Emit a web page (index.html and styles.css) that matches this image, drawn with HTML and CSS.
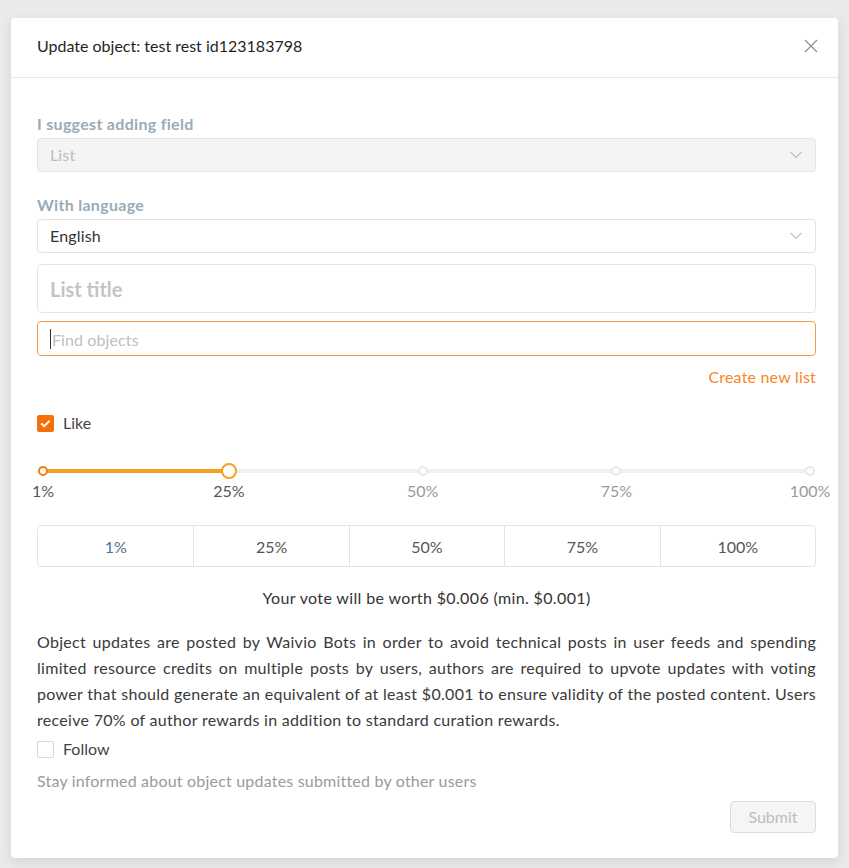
FILE: index.html
```html
<!DOCTYPE html>
<html>
<head>
<meta charset="utf-8">
<link rel="stylesheet" href="styles.css">
</head>
<body>
<div class="backdrop">
  <div class="modal">
    <div class="modal-header">
      <div class="modal-title">Update object: test rest id123183798</div>
      <svg class="close" width="14" height="14" viewBox="0 0 14 14"><path d="M1 1 L13 13 M13 1 L1 13" stroke="#8c8c8c" stroke-width="1.2" fill="none"/></svg>
    </div>
    <div class="modal-body">
      <div class="label">I suggest adding field</div>
      <div class="select disabled">
        <span class="select-value">List</span>
        <svg class="chev" width="12" height="8" viewBox="0 0 12 8"><path d="M0.5 0.8 L6 6.5 L11.5 0.8" stroke="#bdbdbd" stroke-width="1.1" fill="none"/></svg>
      </div>
      <div class="label label-2">With language</div>
      <div class="select">
        <span class="select-value dark">English</span>
        <svg class="chev" width="12" height="8" viewBox="0 0 12 8"><path d="M0.5 0.8 L6 6.5 L11.5 0.8" stroke="#bdbdbd" stroke-width="1.1" fill="none"/></svg>
      </div>
      <div class="title-input">List title</div>
      <div class="find-input"><span class="caret"></span><span class="ph">Find objects</span></div>
      <div class="create-row"><a class="create-link">Create new list</a></div>

      <div class="check-row like-row">
        <span class="checkbox checked"><svg width="11" height="9" viewBox="0 0 11 9"><path d="M1.2 4.4 L4.2 7.2 L9.8 1.6" stroke="#fff" stroke-width="2" fill="none"/></svg></span>
        <span class="check-label">Like</span>
      </div>

      <div class="slider">
        <div class="track">
          <div class="fill" style="width:24.24%"></div>
          <span class="dot active start" style="left:0%"></span>
          <span class="dot" style="left:49.49%"></span>
          <span class="dot" style="left:74.75%"></span>
          <span class="dot" style="left:100%"></span>
          <span class="handle" style="left:24.24%"></span>
          <span class="mark dark" style="left:0%">1%</span>
          <span class="mark dark" style="left:24.24%">25%</span>
          <span class="mark" style="left:49.49%">50%</span>
          <span class="mark" style="left:74.75%">75%</span>
          <span class="mark" style="left:100%">100%</span>
        </div>
      </div>

      <div class="btn-group">
        <div class="seg blue">1%</div>
        <div class="seg">25%</div>
        <div class="seg">50%</div>
        <div class="seg">75%</div>
        <div class="seg">100%</div>
      </div>

      <div class="vote">Your vote will be worth $0.006 (min. $0.001)</div>

      <p class="info">Object updates are posted by Waivio Bots in order to avoid technical posts in user feeds and spending limited resource credits on multiple posts by users, authors are required to upvote updates with voting power that should generate an equivalent of at least $0.001 to ensure validity of the posted content. Users receive 70% of author rewards in addition to standard curation rewards.</p>

      <div class="check-row follow-row">
        <span class="checkbox"></span>
        <span class="check-label">Follow</span>
      </div>
      <div class="hint">Stay informed about object updates submitted by other users</div>
      <div class="footer-row"><button class="submit" disabled>Submit</button></div>
    </div>
  </div>
</div>
</body>
</html>
```
FILE: styles.css
```css
* { box-sizing: border-box; }
html, body { margin: 0; padding: 0; }
body {
  width: 849px;
  height: 868px;
  background: #eaeaea;
  font-family: Lato, "Open Sans", sans-serif;
  overflow: hidden;
}
.backdrop {
  padding: 18px 11px 0 11px;
}
.modal {
  width: 827px;
  height: 840px;
  background: #fff;
  border-radius: 4px;
  box-shadow: 0 4px 12px rgba(0,0,0,0.10);
}
.modal-header {
  height: 60px;
  border-bottom: 1px solid #e8e8e8;
  display: flex;
  align-items: center;
  justify-content: space-between;
  padding: 0 20px 0 26px;
}
.modal-title {
  font-size: 16px;
  color: #1f1f1f;
  line-height: 22px;
  margin-top: -4px;
}
.close { display: block; margin-top: -3px; }
.modal-body {
  padding: 35px 22px 0 26px;
}
.label {
  font-size: 16px;
  font-weight: 700;
  color: #9aabb7;
  line-height: 22px;
  margin-bottom: 3px;
  letter-spacing: 0.3px;
}
.label-2 { margin-top: 22px; }
.select {
  height: 34px;
  border: 1px solid #e4e4e4;
  border-radius: 4px;
  display: flex;
  align-items: center;
  justify-content: space-between;
  padding: 0 13px 0 12px;
  background: #fff;
}
.select.disabled { background: #f4f4f4; }
.select-value { font-size: 16px; color: #bdbdbd; letter-spacing: 0.15px; margin-top: -2px; }
.select-value.dark { color: #333; }
.chev { display: block; }
.title-input {
  margin-top: 11px;
  height: 49px;
  border: 1px solid #e4e4e4;
  border-radius: 4px;
  padding: 0 12px;
  display: flex;
  align-items: center;
  font-size: 20px;
  font-weight: 700;
  color: #c4c4c4;
}
.find-input {
  margin-top: 8px;
  height: 35px;
  border: 1px solid #f5994a;
  border-radius: 4px;
  padding: 0 12px;
  display: flex;
  align-items: center;
  font-size: 16px;
  color: #c0c0c0;
  letter-spacing: 0.1px;
}
.caret {
  display: inline-block;
  width: 1px;
  height: 20px;
  background: #333;
  margin-right: 1px;
  margin-top: 1px;
}
.ph { padding-top: 2px; }
.create-row {
  margin-top: 10px;
  display: flex;
  justify-content: flex-end;
  line-height: 22px;
}
.create-link {
  font-size: 16px;
  color: #f8852a;
  letter-spacing: 0.2px;
}
.check-row {
  display: flex;
  align-items: center;
  line-height: 22px;
  height: 22px;
}
.like-row { margin-top: 24px; }
.checkbox {
  width: 17px;
  height: 17px;
  border: 1px solid #d9d9d9;
  border-radius: 2px;
  display: flex;
  align-items: center;
  justify-content: center;
  margin-right: 9px;
  background: #fff;
}
.checkbox.checked {
  background: #f6700a;
  border-color: #f6700a;
}
.check-label {
  font-size: 16px;
  color: #444;
}
.slider {
  margin-top: 35px;
  padding: 0 6px;
  height: 56px;
}
.track {
  position: relative;
  height: 4px;
  background: #efefef;
  border-radius: 2px;
}
.fill {
  height: 4px;
  background: #f5a31f;
  border-radius: 2px;
}
.dot {
  position: absolute;
  top: -3px;
  width: 10px;
  height: 10px;
  margin-left: -5px;
  border: 2px solid #e8e8e8;
  border-radius: 50%;
  background: #fff;
}
.dot.start { border-color: #f77a12; }
.handle {
  position: absolute;
  top: -6px;
  width: 16px;
  height: 16px;
  margin-left: -8px;
  border: 2px solid #f5a31f;
  border-radius: 50%;
  background: #fff;
}
.mark {
  position: absolute;
  top: 13px;
  transform: translateX(-50%);
  font-size: 16px;
  line-height: 18px;
  color: #9a9a9a;
  white-space: nowrap;
}
.mark.dark { color: #555; }
.btn-group {
  display: grid;
  grid-template-columns: repeat(5, 1fr);
  height: 42px;
  border: 1px solid #e4e4e4;
  border-radius: 4px;
}
.seg {
  display: flex;
  align-items: center;
  justify-content: center;
  font-size: 16px;
  color: #555;
  border-left: 1px solid #e4e4e4;
}
.seg:first-child { border-left: none; }
.seg.blue { color: #4f6f8f; }
.vote {
  margin-top: 20px;
  text-align: center;
  font-size: 16px;
  line-height: 22px;
  color: #333;
  letter-spacing: 0.36px;
}
.info {
  margin: 20px 0 0 0;
  font-size: 16px;
  line-height: 26px;
  color: #3a3a3a;
  text-align: justify;
  letter-spacing: 0.3px;
}
.follow-row { margin-top: 5px; }
.hint {
  margin-top: 10px;
  font-size: 16px;
  line-height: 22px;
  color: #9a9a9a;
  letter-spacing: 0.2px;
}
.footer-row {
  margin-top: 9px;
  display: flex;
  justify-content: flex-end;
}
.submit {
  height: 32px;
  width: 86px;
  border: 1px solid #dcdcdc;
  border-radius: 4px;
  background: #f5f5f5;
  color: #bdbdbd;
  font-family: Lato, "Open Sans", sans-serif;
  font-size: 16px;
  padding: 0 0 2px 0;
}
```
